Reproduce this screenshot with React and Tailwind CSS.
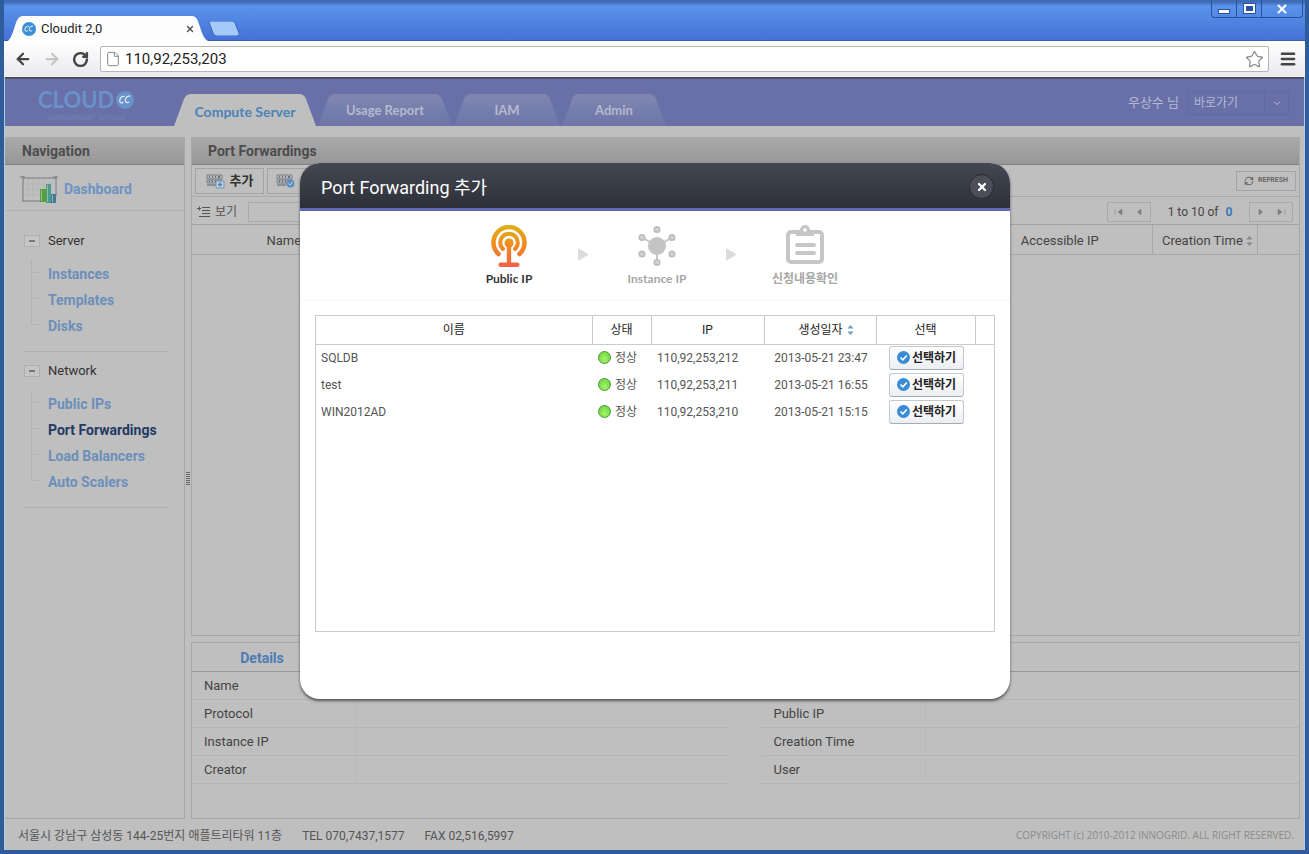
import React, { useState } from "react";
import { ArrowLeft, ArrowRight, File, Menu, RotateCw, Star, X, RefreshCw } from "lucide-react";

const TABS = [
  { label: "Compute Server", width: 142 },
  { label: "Usage Report", width: 134 },
  { label: "IAM", width: 106 },
  { label: "Admin", width: 104 },
];

const NAV_GROUPS = [
  { title: "Server", items: ["Instances", "Templates", "Disks"] },
  {
    title: "Network",
    items: ["Public IPs", "Port Forwardings", "Load Balancers", "Auto Scalers"],
  },
];

const PUBLIC_IPS = [
  { name: "SQLDB", ip: "110,92,253,212", created: "2013-05-21 23:47" },
  { name: "test", ip: "110,92,253,211", created: "2013-05-21 16:55" },
  { name: "WIN2012AD", ip: "110,92,253,210", created: "2013-05-21 15:15" },
];

const CloudBadge = ({ className }) => (
  <svg viewBox="0 0 18 18" className={className} aria-hidden="true">
    <circle cx="9" cy="9" r="9" fill="currentColor" />
    <path
      d="M8.200 5.400c-2.600-.4-4.400 1.900-4.500 4.300 0 1.900 1.800 2.700 3.300 1.700M13.800 5.200c-2.600-.4-4.400 1.900-4.500 4.300 0 1.900 1.900 2.700 3.400 1.700"
      fill="none"
      stroke="#dbe9f5"
      strokeWidth="1.300"
      strokeLinecap="round"
    />
  </svg>
);

const ServerIcon = ({ variant }) => (
  <svg viewBox="0 0 20 16" className="w-5 h-4 shrink-0" aria-hidden="true">
    <path d="M1 2h15v4H1zM1 7h15v3H1z" fill="#b4b7bb" stroke="#7b8086" />
    <path d="M3 4h1M6 4h1M9 4h1M12 4h2M3 8.500h1M6 8.500h1M9 8.500h1" stroke="#55595f" strokeWidth="1.500" />
    <path d="M1 12h9" stroke="#7b8086" strokeWidth="1.500" />
    {variant === "add" ? (
      <>
        <rect x="10" y="8" width="8" height="7" rx="1" fill="#bccddb" stroke="#6f96bb" />
        <path d="M14 9.500v4M12 11.500h4" stroke="#4b83b8" strokeWidth="1.500" />
      </>
    ) : (
      <>
        <circle cx="14.500" cy="10.500" r="4" fill="#5a8fc2" />
        <path d="M12.500 10.500l1.500 1.500 2.500-3" fill="none" stroke="#c9d6e2" />
      </>
    )}
  </svg>
);

const DashboardIcon = () => (
  <svg viewBox="0 0 38 30" className="w-[38px] h-[30px] shrink-0" aria-hidden="true">
    <path d="M3 1v25M3 3h33M36 1v20M0 2h5M33 2h5M2 26h24" fill="none" stroke="#777c81" />
    <path d="M8 5v18M13 5v18M18 5v10M24 5v8M30 5v4M5 9h28M5 15h16M5 20h15" stroke="#b2b5b7" />
    <rect x="20" y="14" width="6" height="13" fill="#57a03b" />
    <rect x="26" y="9" width="5" height="19" fill="#4b9a8d" />
    <rect x="31" y="19" width="5" height="9" fill="#4377a0" />
    <path d="M21.500 15v11M27.500 10v17M32.500 20v7" stroke="#91bf8f" />
  </svg>
);

const PublicIpIcon = () => (
  <svg viewBox="0 0 38 42" className="w-[38px] h-[42px]" fill="none" aria-hidden="true">
    <defs>
      <linearGradient id="antenna" gradientUnits="userSpaceOnUse" x1="0" y1="0" x2="0" y2="42">
        <stop offset="0" stopColor="#dfb012" />
        <stop offset="0.500" stopColor="#f28a22" />
        <stop offset="1" stopColor="#f2604a" />
      </linearGradient>
    </defs>
    <g stroke="url(#antenna)" strokeLinecap="round">
      <path d="M8.500 29A15.500 15.500 0 1 1 29.500 29" strokeWidth="4.500" />
      <path d="M13 24A8.800 8.800 0 1 1 25 24" strokeWidth="4" />
    </g>
    <g fill="url(#antenna)">
      <circle cx="19" cy="18" r="4.500" />
      <path d="M16.800 19h4.400v19h-4.400z" />
      <rect x="8.500" y="37.500" width="21" height="4.500" rx="2" />
    </g>
  </svg>
);

const InstanceIpIcon = () => (
  <svg viewBox="0 0 38 42" className="w-[38px] h-[42px]" aria-hidden="true">
    <g stroke="#c4c4c4" strokeWidth="2">
      <path d="M19 21L4 12.500M19 21L34 12.500M19 21V37" />
    </g>
    <circle cx="19" cy="21" r="9" fill="#c4c4c4" />
    <g fill="#d0d0d0" stroke="#bcbcbc" strokeWidth="1.500">
      <circle cx="19" cy="4.500" r="2.800" />
      <circle cx="4" cy="12.500" r="2.800" />
      <circle cx="34" cy="12.500" r="2.800" />
      <circle cx="4" cy="29" r="2.800" />
      <circle cx="34" cy="29" r="2.800" />
      <circle cx="19" cy="37.500" r="2.800" />
    </g>
  </svg>
);

const ConfirmIcon = () => (
  <svg viewBox="0 0 38 42" className="w-[38px] h-[42px]" fill="none" aria-hidden="true">
    <rect x="2" y="7" width="34" height="30" rx="3" stroke="#c6c6c6" strokeWidth="4" />
    <path d="M10 11V7q0-2 3-2h1a5 5 0 0 1 10 0h1q3 0 3 2v4z" fill="#c6c6c6" />
    <circle cx="19" cy="5" r="1.800" fill="#fff" />
    <path d="M11 20H28M11 28H28" stroke="#c6c6c6" strokeWidth="4" strokeLinecap="round" />
  </svg>
);

const SortIcon = ({ className }) => (
  <svg viewBox="0 0 7 10" className={`w-[7px] h-2.5 ${className}`} fill="currentColor" aria-hidden="true">
    <path d="M3.500 0L6.500 3.500H0.500zM3.500 10L0.500 6.500h6z" />
  </svg>
);

const PageIcon = ({ d }) => (
  <svg viewBox="0 0 9 8" className="w-[9px] h-2" fill="#7d7d7d" stroke="#7d7d7d" aria-hidden="true">
    <path d={d} strokeWidth="0.500" />
  </svg>
);

const BrowserChrome = () => {
  const [url, setUrl] = useState("110,92,253,203");

  return (
    <div>
      <div className="flex items-end h-[41px] pl-1 bg-linear-to-b from-[#3f6cb5] from-5% via-[#5a93ea] via-15% to-[#4471d6] border-b border-[#3a5fae]">
        <div className="relative flex items-center w-[200px] h-[25px] -mb-px">
          <svg viewBox="0 0 201 25" className="absolute inset-0 w-full h-full" aria-hidden="true">
            <path d="M0 25C6 20 7 3 12 1Q13 0 15 0H185Q188 0 190 3C194 12 195 22 201 25Z" fill="#fdfdfe" />
          </svg>
          <CloudBadge className="relative w-3.5 h-3.5 ml-3.5 text-[#3c8fd6]" />
          <span className="relative ml-[5px] text-[13px] text-[#222]">Cloudit 2,0</span>
          <button className="relative ml-auto mr-[13px]" aria-label="탭 닫기">
            <X className="w-2.5 h-2.5 text-[#555]" strokeWidth={3.5} />
          </button>
        </div>
        <button className="mb-1" aria-label="새 탭">
          <svg viewBox="0 0 32 15" className="w-8 h-[15px]" aria-hidden="true">
            <path d="M1 1Q0 0 3 0H24Q26 0 27 2L31 12Q32 15 29 15H9Q6 15 5 12Z" fill="#a5caf8" stroke="#3f68ba" />
          </svg>
        </button>
        <div className="flex self-start ml-auto mr-0.5 h-[18px] border border-t-0 border-[#28529f] rounded-b divide-x divide-[#28529f]">
          <button className="flex items-center justify-center w-[25px]" aria-label="최소화">
            <span className="w-3 h-[5px] mt-1.5 bg-white border border-[#28529f]" />
          </button>
          <button className="flex items-center justify-center w-[25px]" aria-label="최대화">
            <span className="w-[11px] h-[9px] bg-[#28529f] border-2 border-white outline outline-[#28529f]" />
          </button>
          <button className="flex items-center justify-center w-10" aria-label="닫기">
            <X className="w-3.5 h-3.5 text-white" strokeWidth={3.5} />
          </button>
        </div>
      </div>

      <div className="flex items-center h-9 bg-linear-to-b from-white to-[#e9e9ee] pl-2.5 pr-2">
        <button aria-label="뒤로" className="w-[29px]">
          <ArrowLeft className="w-[18px] h-[18px] text-[#444]" strokeWidth={3} />
        </button>
        <button aria-label="앞으로" className="w-[29px]">
          <ArrowRight className="w-[18px] h-[18px] text-[#c4c4c4]" strokeWidth={3} />
        </button>
        <button aria-label="새로고침" className="w-7">
          <RotateCw className="w-[17px] h-[17px] text-[#444]" strokeWidth={3.5} />
        </button>
        <div className="flex flex-1 items-center h-[26px] px-1 bg-white border border-[#b5b5b9] rounded-xs">
          <File className="w-4 h-4 text-[#888]" strokeWidth={1.5} />
          <input
            aria-label="주소"
            value={url}
            onChange={(e) => setUrl(e.target.value)}
            className="flex-1 ml-1 text-[15px] text-[#222] outline-none"
          />
          <Star className="w-[19px] h-[19px] text-[#888]" strokeWidth={1.5} />
        </div>
        <button aria-label="메뉴" className="ml-2.5">
          <Menu className="w-[18px] h-[18px] text-[#444]" strokeWidth={3.5} />
        </button>
      </div>
    </div>
  );
};

const HeaderTab = ({ label, width, active }) => (
  <a
    href="#"
    style={{ width }}
    className={`relative flex items-center justify-center h-8 font-[Lato] font-bold ${
      active ? "text-[14px] text-[#4b82b8]" : "text-[13px] text-[#b4b9cf]"
    }`}
  >
    <svg viewBox={`0 0 ${width} 32`} className="absolute inset-0 w-full h-full" aria-hidden="true">
      <defs>
        <linearGradient id="tabFill" x1="0" y1="0" x2="0" y2="1">
          <stop offset="0" stopColor="#7f87b0" />
          <stop offset="1" stopColor="#6d75a9" />
        </linearGradient>
      </defs>
      <path
        d={`M0 32L10 5Q12 0 17 0H${width - 17}Q${width - 12} 0 ${width - 10} 5L${width} 32Z`}
        fill={active ? "#bfbfbf" : "url(#tabFill)"}
      />
    </svg>
    <span className="relative mt-0.5">{label}</span>
  </a>
);

const AppHeader = () => (
  <header className="flex items-end h-[49px] pr-[15px] bg-[#6970a8] border-t-2 border-[#4c4e62]">
    <a href="#" className="flex flex-col self-start w-[169px] pl-[33px] pt-[11px] leading-none" aria-label="Cloudit">
      <span className="flex items-center h-5 text-[#6a92ca]">
        <span className="font-[Lato] text-[22px] font-bold leading-5">CLOUD</span>
        <CloudBadge className="w-[18px] h-[18px] ml-0.5" />
      </span>
      <span className="mt-1 pl-2.5 text-[7px] leading-[8px] text-[#7480b3]">MANAGEMENT SERVICE</span>
    </a>
    <nav className="flex gap-0.5">
      {TABS.map((tab, i) => (
        <HeaderTab key={tab.label} {...tab} active={i === 0} />
      ))}
    </nav>
    <div className="flex items-center gap-2 self-start ml-auto pt-3 text-[#b3b9d4]">
      <span className="text-[13px]">우상수 님</span>
      <button className="flex items-center w-[102px] h-6 text-[12px] border border-[#616aa0]">
        <span className="flex-1 pl-1.5 text-left">바로가기</span>
        <span className="flex items-center justify-center w-6 h-full border-l border-[#616aa0]">
          <svg viewBox="0 0 8 5" className="w-2 h-[5px]" fill="none" stroke="currentColor" aria-hidden="true">
            <path d="M1 1l3 2.500L7 1" />
          </svg>
        </span>
      </button>
    </div>
  </header>
);

const NavGroup = ({ title, items }) => (
  <section className="ml-[19px] mr-4 pt-[5px] pb-[13px] border-b border-[#b1b1b1]">
    <button className="flex items-center gap-2 h-[26px] pt-0.5 text-[13px] text-[#333]">
      <span className="flex items-center justify-center w-4 h-3 bg-[#c5c5c5] border border-[#b0b0b0]">
        <span className="w-1.5 h-0.5 bg-[#777]" />
      </span>
      {title}
    </button>
    <ul className="mt-[7px] pl-[7px]">
      {items.map((item) => (
        <li key={item} className="group flex items-center h-[26px]">
          <span className="flex flex-col w-2 h-full border-l border-[#b4b4b4] group-last:h-[13px] group-last:self-start">
            <span className="h-[13px] border-b border-[#b4b4b4]" />
          </span>
          <a
            href="#"
            className={`pl-[9px] pt-0.5 text-[14px] font-bold ${
              item === "Port Forwardings" ? "text-[#243a63]" : "text-[#6c8fba]"
            }`}
          >
            {item}
          </a>
        </li>
      ))}
    </ul>
  </section>
);

const Sidebar = () => (
  <aside className="w-[180px] border-r border-b border-[#a8a8a8]">
    <h2 className="flex items-center h-7 pt-0.5 pl-[17px] text-[14px] font-bold text-[#4c4c4c] bg-linear-to-b from-[#aaaaaa] to-[#979797] border-b border-[#808080]">
      Navigation
    </h2>
    <a
      href="#"
      className="flex items-center gap-1.5 h-[46px] pt-1 pl-[15px] text-[14px] font-bold text-[#6c93c2] border-b border-[#b1b1b1]"
    >
      <DashboardIcon />
      Dashboard
    </a>
    <div className="pt-[11px]">
      {NAV_GROUPS.map((group) => (
        <NavGroup key={group.title} {...group} />
      ))}
    </div>
  </aside>
);

const ForwardingPanel = () => (
  <section className="flex-1 border border-t-0 border-[#a8a8a8]">
    <h2 className="flex items-center h-7 pt-0.5 pl-4 text-[14px] font-bold text-[#4c4c4c] bg-linear-to-b from-[#aaaaaa] to-[#979797] border-b border-[#808080]">
      Port Forwardings
    </h2>
    <div className="flex items-center gap-[3px] h-8 px-[3px] border-b border-[#a9a9a9]">
      <button className="flex items-center justify-center gap-1 w-[69px] h-[26px] text-[13px] font-bold text-[#333] border border-[#a3a3a3]">
        <ServerIcon variant="add" />
        추가
      </button>
      <button className="flex items-center w-[69px] h-[26px] pl-2 border border-[#a3a3a3]" aria-label="삭제">
        <ServerIcon variant="remove" />
      </button>
      <button className="flex items-center justify-center gap-1 w-[60px] h-5 ml-auto text-[7px] font-bold text-[#666] border border-[#a3a3a3]">
        <RefreshCw className="w-2.5 h-2.5" strokeWidth={2.5} />
        REFRESH
      </button>
    </div>
    <div className="flex items-center h-7 pt-0.5 pl-[5px] pr-1.5 text-[12px] text-[#444] border-b border-[#a3a3a3]">
      <label htmlFor="view" className="flex items-center gap-[5px] w-[51px] text-[#555]">
        <svg viewBox="0 0 13 12" className="w-[13px] h-3" stroke="#555" aria-hidden="true">
          <path d="M5 1.500h8M5 4.500h8M5 7.500h8M2 10.500h11" />
          <path d="M0 2.500h4M2.500 0.500v4" />
        </svg>
        보기
      </label>
      <input id="view" className="w-[150px] h-5 border border-[#a9a9a9]" />
      <div className="flex items-center ml-auto">
        <div className="flex items-center justify-around w-11 h-5 border border-[#a9a9a9]">
          <button aria-label="처음"><PageIcon d="M1 1v6M8 1v6L4 4z" /></button>
          <button aria-label="이전"><PageIcon d="M6 1v6L2.500 4z" /></button>
        </div>
        <span className="w-[98px] text-center">
          1 to 10 of <b className="ml-1 text-[#3a7ab4]">0</b>
        </span>
        <div className="flex items-center justify-around w-11 h-5 border border-[#a9a9a9]">
          <button aria-label="다음"><PageIcon d="M3 1v6L6.500 4z" /></button>
          <button aria-label="마지막"><PageIcon d="M8 1v6M1 1v6L5 4z" /></button>
        </div>
      </div>
    </div>
    <table className="w-full table-fixed text-[13px] text-[#444]">
      <thead>
        <tr className="h-[29px] border-b border-[#a9a9a9]">
          <th className="w-[184px] pt-0.5 font-normal border-r border-[#a9a9a9]">Name</th>
          <th aria-label="Details" />
          <th className="w-[184px] pt-0.5 font-normal border-r border-[#a9a9a9]">Accessible IP</th>
          <th className="w-[105px] pt-0.5 pl-1.5 font-normal border-r border-[#a9a9a9] whitespace-nowrap">
            Creation Time <SortIcon className="inline text-[#888]" />
          </th>
          <th className="w-[42px]" aria-label="스크롤" />
        </tr>
      </thead>
    </table>
  </section>
);

const DetailField = ({ label }) => (
  <div className="flex h-7 border-b border-[#b5b5b5]">
    <dt className="flex items-center w-[164px] pl-3 border-r border-[#bababa]">{label}</dt>
    <dd className="flex-1" />
  </div>
);

const DetailsPanel = () => (
  <section className="pb-[34px] text-[13px] text-[#444] border border-[#a8a8a8]">
    <div className="flex items-center h-[29px] pt-0.5 border-b border-[#999]">
      <a href="#" className="w-[140px] text-center text-[14px] font-bold text-[#4d7bb3]">
        Details
      </a>
    </div>
    <dl>
      <DetailField label="Name" />
      <div className="grid grid-cols-2 gap-x-8">
        {["Protocol", "Public IP", "Instance IP", "Creation Time", "Creator", "User"].map((label) => (
          <DetailField key={label} label={label} />
        ))}
      </div>
    </dl>
  </section>
);

const Step = ({ icon, label, active }) => (
  <li
    className={`flex flex-col items-center gap-[3px] w-24 font-[Lato,'Noto_Sans_CJK_KR'] text-[12px] leading-[18px] font-bold whitespace-nowrap ${
      active ? "text-[#333]" : "text-[#a6a6a6]"
    }`}
  >
    {icon}
    {label}
  </li>
);

const StepArrow = () => (
  <li className="flex justify-center w-[52px] pt-[23px]" aria-hidden="true">
    <svg viewBox="0 0 11 13" className="w-[11px] h-[13px]" fill="#dcdcdc">
      <path d="M0 0L11 6.500L0 13z" />
    </svg>
  </li>
);

const AddForwardingDialog = ({ onClose }) => (
  <div
    role="dialog"
    aria-labelledby="dialog-title"
    className="w-[710px] bg-white rounded-[20px] shadow-[0_2px_3px_#555] overflow-hidden"
  >
    <div className="flex items-center justify-between h-12 pt-0.5 pl-[21px] pr-4 bg-linear-to-b from-[#444852] to-[#2d3039] border-b-3 border-[#6467b8]">
      <h2 id="dialog-title" className="pt-0.5 text-[18px] text-white">
        Port Forwarding 추가
      </h2>
      <button
        onClick={onClose}
        aria-label="닫기"
        className="flex items-center justify-center w-[25px] h-[25px] rounded-full bg-[#4c4f59] border border-[#2a2c34]"
      >
        <X className="w-3 h-3 text-white" strokeWidth={4.5} />
      </button>
    </div>

    <ol className="flex justify-center h-[90px] pt-3.5 pl-1 border-b border-[#f7f7f7]">
      <Step icon={<PublicIpIcon />} label="Public IP" active />
      <StepArrow />
      <Step icon={<InstanceIpIcon />} label="Instance IP" />
      <StepArrow />
      <Step icon={<ConfirmIcon />} label="신청내용확인" />
    </ol>

    <div className="px-[15px] pt-3.5 pb-[67px]">
      <div className="h-[317px] border border-[#c9cbce]">
        <table className="w-full table-fixed text-[12px] text-[#555]">
          <thead>
            <tr className="h-7 text-[#222] border-b border-[#c9cbce]">
              <th className="font-normal border-r border-[#c9cbce]">이름</th>
              <th className="w-[59px] font-normal border-r border-[#c9cbce]">상태</th>
              <th className="w-[113px] font-normal border-r border-[#c9cbce]">IP</th>
              <th className="w-28 font-normal border-r border-[#c9cbce]">
                <span className="flex items-center justify-center gap-1 pl-3">
                  생성일자 <SortIcon className="text-[#6f9cc4]" />
                </span>
              </th>
              <th className="w-[99px] font-normal border-r border-[#c9cbce]">선택</th>
              <th className="w-[19px]" aria-label="스크롤" />
            </tr>
          </thead>
          <tbody>
            {PUBLIC_IPS.map((row) => (
              <tr key={row.ip} className="h-[27px]">
                <td className="pl-[5px]">{row.name}</td>
                <td>
                  <span className="flex items-center gap-1 pl-1.5">
                    <span className="w-[13px] h-[13px] rounded-full border border-[#4f9a35] bg-radial-[at_50%_70%] from-[#a4f56a] to-[#63cf3c]" />
                    정상
                  </span>
                </td>
                <td className="pl-1.5">{row.ip}</td>
                <td className="pl-0.5 text-center whitespace-nowrap">{row.created}</td>
                <td className="pl-0.5">
                  <button className="flex items-center justify-center gap-0.5 w-[75px] h-6 mx-auto text-[12px] font-bold text-[#222] bg-linear-to-b from-white to-[#eceef2] border border-[#c3c8ce] border-b-[#a5abb3] rounded-[3px]">
                    <svg viewBox="0 0 13 13" className="w-[13px] h-[13px] shrink-0" aria-hidden="true">
                      <circle cx="6.500" cy="6.500" r="6.500" fill="#3b8cd6" />
                      <path d="M3.500 6.500l2.300 2.300L9.800 4.500" fill="none" stroke="#fff" strokeWidth="1.600" />
                    </svg>
                    선택하기
                  </button>
                </td>
                <td />
              </tr>
            ))}
          </tbody>
        </table>
      </div>
    </div>
  </div>
);

const App = () => {
  const [dialogOpen, setDialogOpen] = useState(true);

  return (
    <div className="flex flex-col min-h-screen bg-[#315ea6] border-x-4 border-b-4 border-[#315c9c] font-[Roboto,'Noto_Sans_CJK_KR',sans-serif]">
      <BrowserChrome />
      <div className="relative flex flex-col flex-1 bg-[#bfbfbf] border-x border-[#a9cfe6]">
        <AppHeader />
        <main className="flex flex-1 pt-[11px] pr-1">
          <Sidebar />
          {/* Splitter */}
          <div className="flex flex-col items-center justify-center gap-px w-1.5">
            {[0, 1, 2, 3, 4, 5, 6].map((n) => (
              <span key={n} className="w-1 h-px bg-[#666]" />
            ))}
          </div>
          <div className="flex flex-col flex-1 gap-1.5">
            <ForwardingPanel />
            <DetailsPanel />
          </div>
        </main>
        <footer className="flex items-center gap-5 h-[31px] pt-0.5 pl-[13px] pr-2.5 text-[12px] text-[#555]">
          <span>서울시 강남구 삼성동 144-25번지 애플트리타워 11층</span>
          <span>TEL 070,7437,1577</span>
          <span>FAX 02,516,5997</span>
          <span className="ml-auto font-['Open_Sans'] text-[10px] text-[#8c8c8c]">
            COPYRIGHT (c) 2010-2012 INNOGRID. ALL RIGHT RESERVED.
          </span>
        </footer>

        {dialogOpen && (
          <div className="absolute inset-0 flex items-start justify-center pt-[86px] pl-px">
            <AddForwardingDialog onClose={() => setDialogOpen(false)} />
          </div>
        )}
      </div>
    </div>
  );
};

export default App;
